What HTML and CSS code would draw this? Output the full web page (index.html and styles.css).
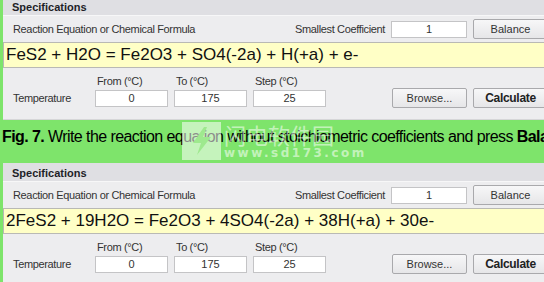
FILE: index.html
```html
<!DOCTYPE html>
<html lang="en">
<head>
    <meta charset="UTF-8">
    <title>Reaction Equation - Fig. 7</title>
    <link rel="stylesheet" href="styles.css">
</head>
<body>

    <div class="panel first">
        <div class="panel-header">Specifications</div>
        <div class="eq-row">
            <span class="label">Reaction Equation or Chemical Formula</span>
            <span class="label coef-label">Smallest Coefficient</span>
            <div class="field coef">1</div>
            <button class="button">Balance</button>
        </div>
        <div class="equation">FeS2 + H2O = Fe2O3 + SO4(-2a) + H(+a) + e-</div>
        <div class="temp-grid">
            <span></span>
            <span class="label col-head">From (°C)</span>
            <span class="label col-head">To (°C)</span>
            <span class="label col-head">Step (°C)</span>
            <span></span><span></span><span></span>
            <span class="label">Temperature</span>
            <div class="field">0</div>
            <div class="field">175</div>
            <div class="field">25</div>
            <span></span>
            <button class="button">Browse...</button>
            <button class="button bold">Calculate</button>
        </div>
    </div>

    <div class="caption">
        <b>Fig. 7.</b> Write the reaction equation without stoichiometric coefficients and press <b>Balance</b>.
        <!-- site watermark sitting over the caption -->
        <div class="watermark">
            <div class="wm-logo">
                <svg width="26" height="30" viewBox="0 0 26 30">
                    <path d="M15 1 L4 17 L12 17 L8 29 L22 11 L14 11 L18 1 Z" fill="#9ee98e"/>
                </svg>
            </div>
            <div class="wm-text">
                <div class="wm-name">闪电软件园</div>
                <div class="wm-url">www.sd173.com</div>
            </div>
        </div>
    </div>

    <div class="panel">
        <div class="panel-header">Specifications</div>
        <div class="eq-row">
            <span class="label">Reaction Equation or Chemical Formula</span>
            <span class="label coef-label">Smallest Coefficient</span>
            <div class="field coef">1</div>
            <button class="button">Balance</button>
        </div>
        <div class="equation">2FeS2 + 19H2O = Fe2O3 + 4SO4(-2a) + 38H(+a) + 30e-</div>
        <div class="temp-grid">
            <span></span>
            <span class="label col-head">From (°C)</span>
            <span class="label col-head">To (°C)</span>
            <span class="label col-head">Step (°C)</span>
            <span></span><span></span><span></span>
            <span class="label">Temperature</span>
            <div class="field">0</div>
            <div class="field">175</div>
            <div class="field">25</div>
            <span></span>
            <button class="button">Browse...</button>
            <button class="button bold">Calculate</button>
        </div>
    </div>

</body>
</html>
```

FILE: styles.css
```css
html, body {
    margin: 0;
    overflow: hidden;
}

body {
    width: 544px;
    height: 282px;
    background-color: #7ee46b; /* green page behind the screenshots */
    font-family: "Liberation Sans", Arial, sans-serif;
}

.panel {
    width: 560px;
    margin-left: 3px;
    background-color: #ededef;
    border-bottom: 1px solid #d6d6d8;
}

.panel.first {
    margin-top: -3px;
}

.panel-header {
    height: 15px;
    line-height: 15px;
    padding: 3px 0 0 9px;
    background-color: #dfdfe3;
    border-bottom: 1px solid #f7f7f8;
    font-size: 11px;
    font-weight: bold;
    color: #1e1e28;
}

.label {
    font-size: 11px;
    letter-spacing: -0.35px;
    color: #333;
    white-space: nowrap;
}

.eq-row {
    display: flex;
    align-items: center;
    height: 26px;
    padding-left: 10px;
}

.coef-label {
    margin-left: auto;
    margin-right: 6px;
}

.field {
    height: 15px;
    line-height: 15px;
    background-color: #fff;
    border: 1px solid #c4c4c6;
    font-size: 11px;
    color: #333;
    text-align: center;
}

.coef {
    width: 74px;
    margin-right: 6px;
}

.button {
    height: 20px;
    padding: 0;
    border: 1px solid #a9a9ac;
    border-radius: 2px;
    background: linear-gradient(#f7f7f8, #e6e6e8);
    font-family: "Liberation Sans", Arial, sans-serif;
    font-size: 11px;
    color: #333;
}

.eq-row .button {
    width: 75px;
    margin-right: 15px;
}

.bold {
    font-weight: bold;
    font-size: 12px;
    letter-spacing: -0.3px;
    color: #222;
}

.equation {
    height: 24px;
    line-height: 24px;
    padding-left: 2px;
    background-color: #ffffc6;
    border: 1px solid #b9b9b4;
    font-size: 17px;
    color: #111;
    white-space: nowrap;
}

.temp-grid {
    display: grid;
    grid-template-columns: 76px 73px 73px 73px 1fr 75px 75px;
    grid-template-rows: 14px 20px;
    column-gap: 6px;
    align-items: center;
    padding: 6px 15px 11px 10px;
}

.temp-grid .col-head {
    padding-left: 2px;
}

.caption {
    position: relative;
    height: 43px;
    padding: 8px 0 0 2px;
    box-sizing: border-box;
    font-family: "Liberation Sans", Arial, sans-serif;
    font-size: 16px;
    letter-spacing: -0.58px;
    color: #000;
    white-space: nowrap;
}

.watermark {
    position: absolute;
    left: 182px;
    top: 2px;
    display: flex;
    gap: 3px;
    letter-spacing: 0;
    pointer-events: none;
}

.wm-logo {
    width: 39px;
    height: 38px;
    background-color: rgba(255, 255, 255, 0.55);
    display: flex;
    align-items: center;
    justify-content: center;
}

.wm-text {
    color: rgba(255, 255, 255, 0.55);
}

.wm-name {
    font-family: "Noto Sans CJK SC", sans-serif;
    font-size: 22px;
    line-height: 25px;
}

.wm-url {
    font-family: "DejaVu Sans", sans-serif;
    font-size: 12px;
    font-weight: bold;
    line-height: 13px;
    letter-spacing: 2.5px;
}
```
